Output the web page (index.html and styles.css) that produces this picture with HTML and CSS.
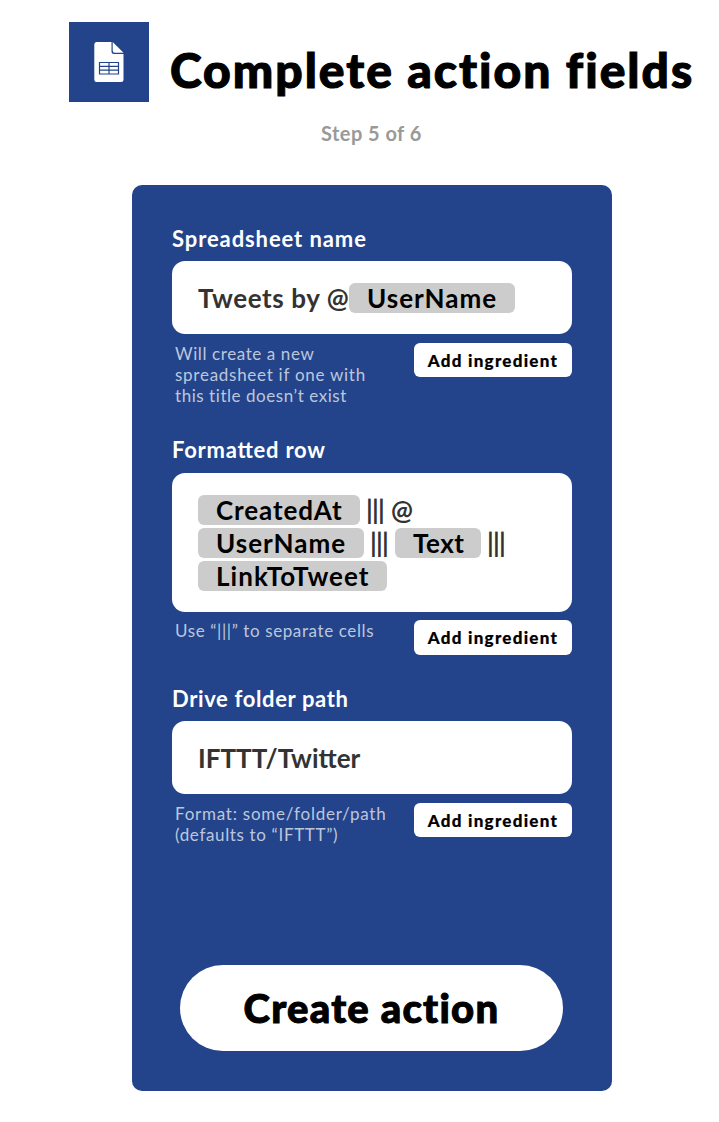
FILE: index.html
```html
<!DOCTYPE html>
<html lang="en">
<head>
<meta charset="utf-8">
<title>Complete action fields</title>
<link rel="stylesheet" href="styles.css">
</head>
<body>
<header class="header">
  <div class="logo">
    <svg width="30" height="40" viewBox="0 0 30 40">
      <path d="M2.500 0H17.500v9.500q0 2.500 2.500 2.500H29.500V37.500Q29.500 40 27 40H2.500Q0.300 40 0.300 37.500V2.500Q0.300 0 2.500 0Z" fill="#fff"/>
      <path d="M18.700 0 29.500 10.800H20.700q-2 0-2-2Z" fill="#fff"/>
      <path d="M5.500 20.500h19v11.500h-19ZM5.500 24.300h19M5.500 28.200h19M15 20.500v11.500" fill="none" stroke="#23448b" stroke-width="1.200"/>
    </svg>
  </div>
  <h1 class="title">Complete action fields</h1>
</header>
<p class="step">Step 5 of 6</p>
<main class="card">
  <section class="field field-name">
    <h2 class="label label-name">Spreadsheet name</h2>
    <div class="input"><span class="tweets">Tweets by @</span><span class="pill user">UserName</span></div>
    <div class="foot">
      <p class="hint"><span class="hint-one">Will create a new</span><br><span class="hint-two">spreadsheet if one with</span><br><span class="hint-three">this title doesn’t exist</span></p>
      <button class="add">Add ingredient</button>
    </div>
  </section>
  <section class="field field-row">
    <h2 class="label label-row">Formatted row</h2>
    <div class="input input-tall">
      <div class="line"><span class="pill created">CreatedAt</span><span class="bars">|||</span><span class="at">@</span></div>
      <div class="line"><span class="pill user">UserName</span><span class="bars">|||</span><span class="pill text">Text</span><span class="bars">|||</span></div>
      <div class="line"><span class="pill link">LinkToTweet</span></div>
    </div>
    <div class="foot foot-row">
      <p class="hint hint-use">Use “|||” to separate cells</p>
      <button class="add add-tall">Add ingredient</button>
    </div>
  </section>
  <section class="field field-path">
    <h2 class="label label-path">Drive folder path</h2>
    <div class="input"><span class="path">IFTTT/Twitter</span></div>
    <div class="foot">
      <p class="hint"><span class="hint-format">Format: some/folder/path</span><br><span class="hint-default">(defaults to “IFTTT”)</span></p>
      <button class="add">Add ingredient</button>
    </div>
  </section>
  <button class="create">Create action</button>
</main>
</body>
</html>
```

FILE: styles.css
```css
* { box-sizing: border-box; }
body {
  margin: 0;
  padding-top: 22px;
  height: 1122px;
  background: #fff;
  font-family: Lato, "Open Sans", sans-serif;
  overflow: hidden;
}
h1, h2, p { margin: 0; }
button { border: 0; padding: 0; background: #fff; color: #000; font-family: inherit; white-space: nowrap; }
.header { display: flex; padding-left: 69px; height: 80px; }
.logo { display: flex; align-items: center; justify-content: center; width: 80px; height: 80px; background: #23448b; }
.title { margin-left: 21px; font-size: 48px; line-height: 96px; font-weight: 900; letter-spacing: 1.98px; -webkit-text-stroke: 1.1px #000; white-space: nowrap; color: #000; }
.step { margin: 19px 0 0 321px; height: 24px; line-height: 24px; font-size: 20px; font-weight: 700; letter-spacing: .45px; color: #999; white-space: nowrap; }
.card { margin: 40px 0 0 132px; width: 480px; height: 906px; padding: 40px 40px 0; border-radius: 10px; background: #23448b; }
.field-name { height: 211px; }
.field-row { height: 249px; }
.field-path { height: 280px; }
.label { height: 36px; line-height: 28px; font-size: 22px; font-weight: 700; color: #fff; white-space: nowrap; }
.label-name { letter-spacing: .9px; }
.label-row { letter-spacing: .75px; font-feature-settings: "liga" 1; }
.label-path { letter-spacing: .63px; }
.input { display: flex; align-items: center; height: 73px; padding: 0 26px; border-radius: 13px; background: #fff; color: #333; font-size: 26px; font-weight: 700; white-space: nowrap; }
.input-tall { flex-direction: column; align-items: flex-start; height: 139px; padding-top: 20px; margin-top: 1px; }
.line { display: flex; align-items: center; height: 33px; }
.tweets { width: 151px; letter-spacing: .6px; }
.pill { height: 30px; line-height: 30px; padding-left: 18px; border-radius: 6px; background: #ccc; color: #000; }
.user { width: 166px; letter-spacing: 1px; }
.created { width: 162px; letter-spacing: .9px; }
.text { width: 86px; letter-spacing: .5px; }
.link { width: 189px; letter-spacing: 1.05px; }
.bars { width: 31px; padding-left: 6px; letter-spacing: -.8px; }
.foot { display: flex; justify-content: space-between; align-items: flex-start; padding: 9px 0 0 3px; }
.foot-row { padding-top: 8px; }
.hint { line-height: 21px; font-size: 17px; font-weight: 400; color: #bdc7dc; white-space: nowrap; }
.hint-one { letter-spacing: .6px; }
.hint-two { letter-spacing: .73px; }
.hint-three { letter-spacing: .55px; }
.hint-use { letter-spacing: .61px; }
.hint-format { letter-spacing: .76px; }
.hint-default { letter-spacing: .65px; }
.add { width: 158px; height: 34px; border-radius: 6px; font-size: 17px; font-weight: 900; letter-spacing: 1.25px; -webkit-text-stroke: .2px #000; }
.add-tall { height: 35px; }
.create { display: block; width: 383px; height: 86px; margin-left: 8px; border-radius: 43px; font-size: 40px; font-weight: 900; letter-spacing: 1.25px; -webkit-text-stroke: 1px #000; }
```
